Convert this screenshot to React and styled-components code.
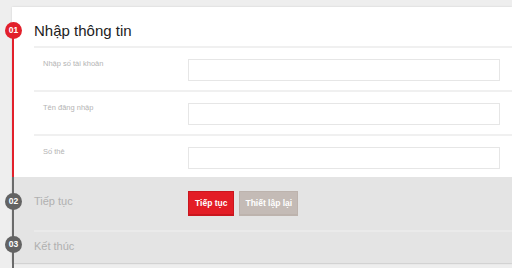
import React from "react";
import styled, { createGlobalStyle } from "styled-components";

const GlobalStyle = createGlobalStyle`
  html, body {
    margin: 0;
    padding: 0;
    background: #eeeeee;
    font-family: "Liberation Sans", Arial, sans-serif;
  }
`;

const Page = styled.div`
  width: 512px;
  height: 268px;
  overflow: hidden;
  padding: 7px 0 0 12px;
  box-sizing: border-box;
`;

const Card = styled.div`
  background: #ffffff;
  box-shadow: 0 0 2px rgba(0, 0, 0, 0.12);
`;

const Step = styled.div`
  position: relative;
  &::before {
    content: "";
    position: absolute;
    left: 0;
    width: 2px;
    top: ${(p) => p.$lineTop || 0}px;
    bottom: ${(p) => p.$lineBottom || 0}px;
    background: ${(p) => (p.$active ? "#e2202b" : "#6a6a6a")};
  }
`;

const Dot = styled.span`
  position: absolute;
  left: -7px;
  top: ${(p) => p.$top}px;
  width: 17px;
  height: 17px;
  border-radius: 50%;
  background: ${(p) => (p.$active ? "#e2202b" : "#636363")};
  color: #fff;
  font-size: 8.5px;
  font-weight: bold;
  line-height: 17px;
  text-align: center;
  z-index: 1;
`;

const Heading = styled.h2`
  margin: 0;
  height: 39px;
  box-sizing: border-box;
  padding: 15px 0 0 22px;
  font-size: 15px;
  line-height: 17px;
  font-weight: normal;
  color: #222;
`;

const Body = styled.div`
  margin-left: 22px;
  border-top: 2px solid #f0f0f0;
`;

const Row = styled.div`
  display: flex;
  align-items: flex-start;
  height: ${(p) => (p.$last ? 41 : 44)}px;
  padding: 11px 0 0 9px;
  box-sizing: border-box;
  border-bottom: ${(p) => (p.$last ? "none" : "2px solid #f0f0f0")};
`;

const Label = styled.label`
  width: 145px;
  flex: none;
  font-size: 7.5px;
  line-height: 9px;
  color: #b4b4b4;
`;

const Input = styled.input`
  width: 312px;
  height: 22px;
  box-sizing: border-box;
  border: 1px solid #e6e6e6;
  background: #fff;
  margin: 0;
  padding: 0 6px;
  outline: none;
`;

const Gray = styled.div`
  background: #e4e4e4;
  box-shadow: 0 1px 1px rgba(0, 0, 0, 0.08);
`;

const StepRow = styled.div`
  display: flex;
  align-items: flex-start;
  padding: ${(p) => p.$pad};
  height: ${(p) => p.$h}px;
  box-sizing: border-box;
  border-bottom: ${(p) => (p.$divider ? "2px solid #eaeaea" : "none")};
  margin-left: 22px;
`;

const StepLabel = styled.div`
  width: 154px;
  flex: none;
  font-size: 11px;
  line-height: 20px;
  color: #b0b0b0;
`;

const Buttons = styled.div`
  display: flex;
  gap: 5px;
`;

const Button = styled.button`
  height: 25px;
  padding: 0 ${(p) => (p.$primary ? 6 : 5)}px;
  border: 1px solid ${(p) => (p.$primary ? "#c9161e" : "#bdb3ad")};
  border-bottom-width: 2px;
  background: ${(p) => (p.$primary ? "#e31d26" : "#c4bbb6")};
  color: #fff;
  font-family: "Liberation Sans", Arial, sans-serif;
  font-weight: bold;
  font-size: 8.5px;
  cursor: pointer;
`;

const fields = ["Nhập số tài khoản", "Tên đăng nhập", "Số thẻ"];

export default function App() {
  return (
    <>
      <GlobalStyle />
      <Page>
        <Card>
          <Step $active $lineTop={24}>
            <Dot $active $top={15}>01</Dot>
            <Heading>Nhập thông tin</Heading>
            <Body>
              {fields.map((f, i) => (
                <Row key={f} $last={i === fields.length - 1}>
                  <Label>{f}</Label>
                  <Input type="text" />
                </Row>
              ))}
            </Body>
          </Step>
          <Gray>
            <Step>
              <Dot $top={16}>02</Dot>
              <StepRow $pad="14px 0 0 0" $h={55} $divider>
                <StepLabel>Tiếp tục</StepLabel>
                <Buttons>
                  <Button $primary>Tiếp tục</Button>
                  <Button>Thiết lập lại</Button>
                </Buttons>
              </StepRow>
            </Step>
            <Step $lineBottom={-6}>
              <Dot $top={4}>03</Dot>
              <StepRow $pad="4px 0 0 0" $h={31}>
                <StepLabel>Kết thúc</StepLabel>
              </StepRow>
            </Step>
          </Gray>
        </Card>
      </Page>
    </>
  );
}
